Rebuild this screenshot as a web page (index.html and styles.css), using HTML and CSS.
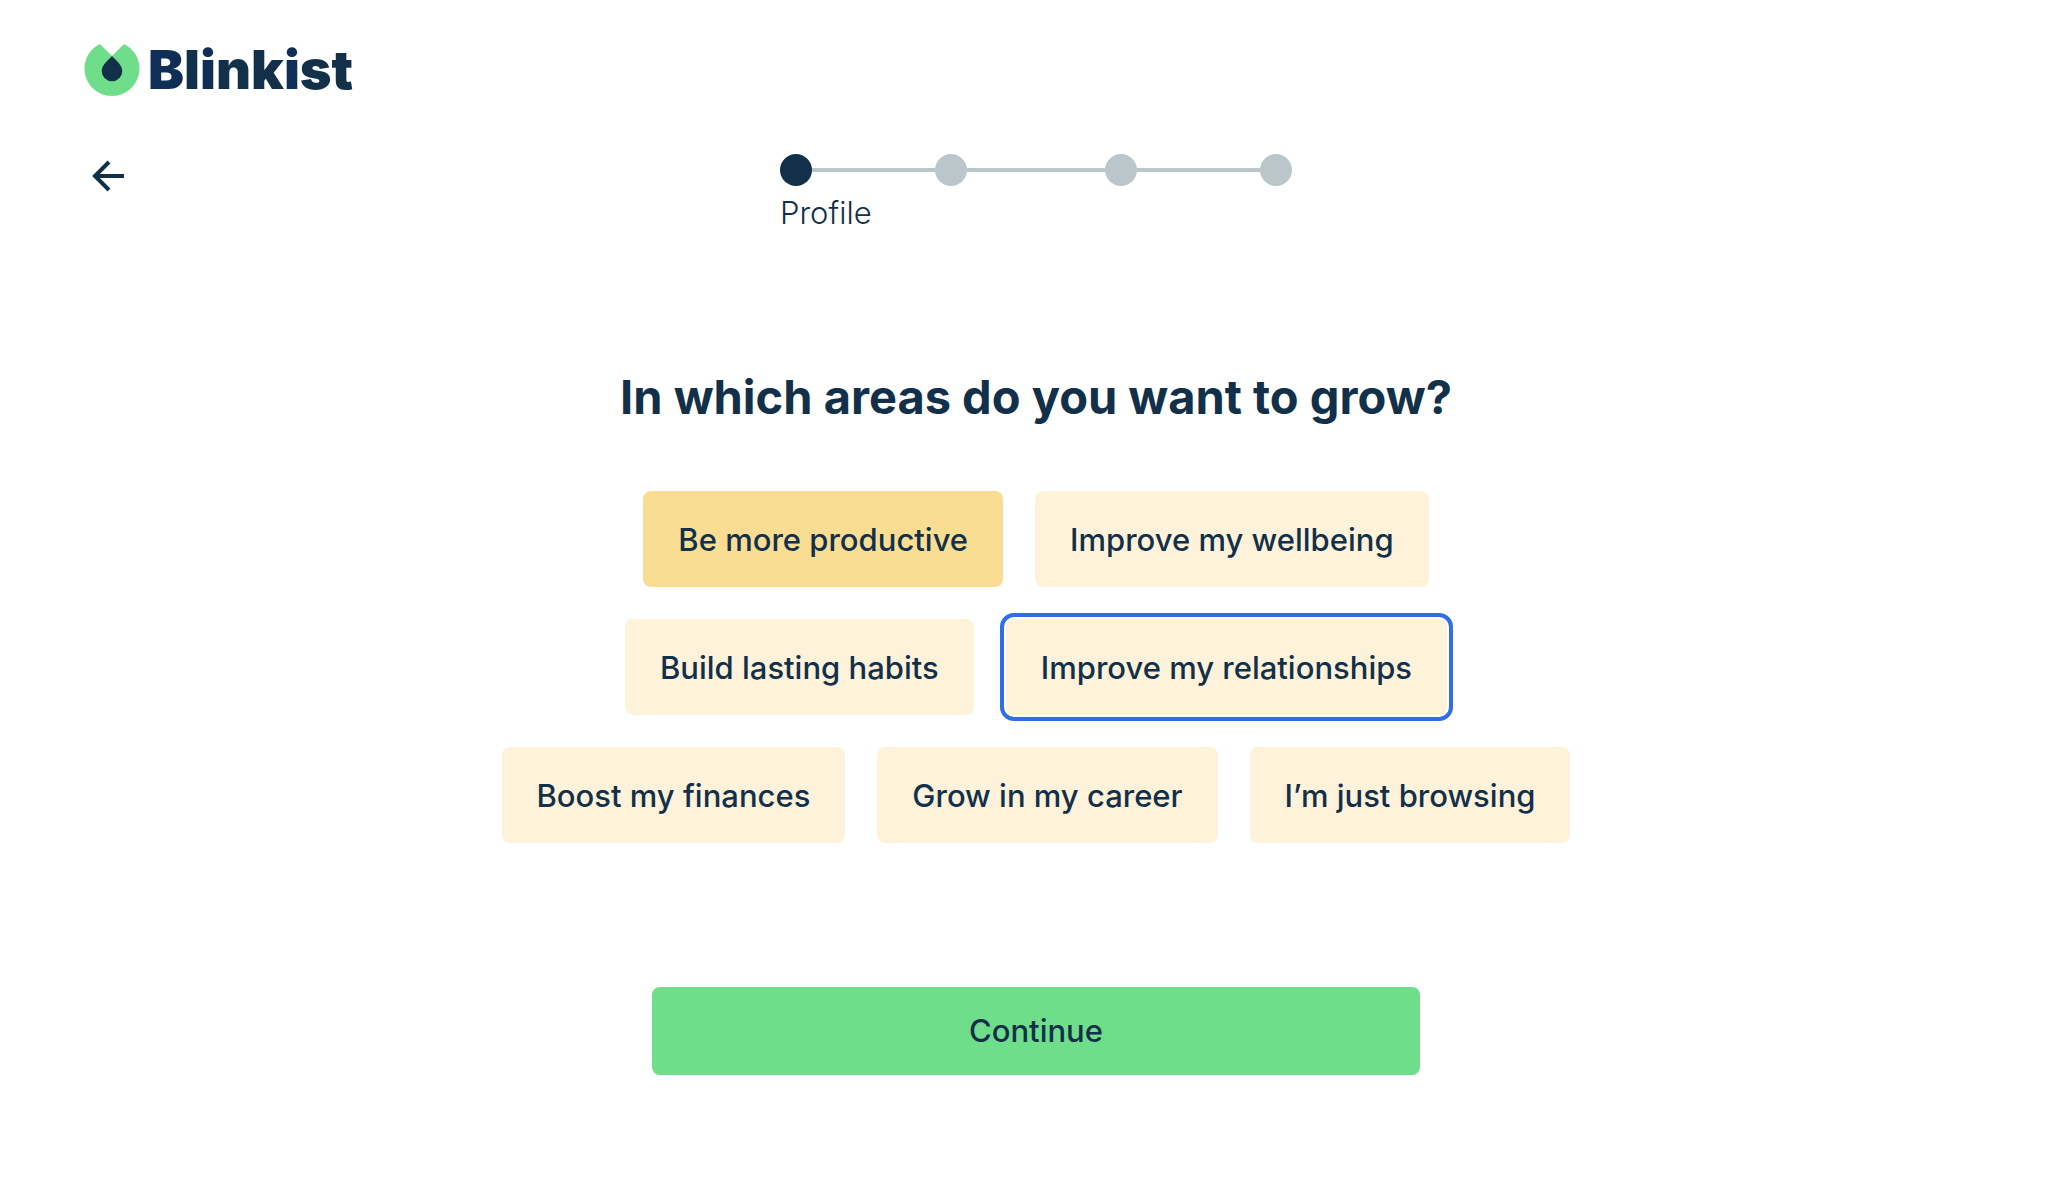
FILE: index.html
```html
<!DOCTYPE html>
<html lang="en">
<head>
  <meta charset="utf-8">
  <meta name="viewport" content="width=device-width, initial-scale=1">
  <title>Blinkist</title>
  <link rel="stylesheet" href="styles.css">
</head>
<body>
  <header class="header">
    <a class="logo" href="#">
      <svg class="logo-mark" viewBox="0 0 56 52" aria-hidden="true">
        <path fill="#6fde8a" d="M15.8 0 28 12 40 0A27.5 27.5 0 0 1 55.500 24.500C55.500 39.700 43.200 52 28 52S.5 39.700.5 24.500A27.500 27.500 0 0 1 15.800 0Z"/>
        <path fill="#13304a" d="M28 12c3.200 3.800 10.300 8.600 10.300 15A10.300 10.300 0 0 1 17.700 27C17.700 20.600 24.800 15.800 28 12Z"/>
      </svg>
      <span class="wordmark"><span class="tint">B</span>l<span class="tint">i</span>nk<span class="tint">i</span>st</span>
    </a>
  </header>

  <div class="topbar">
    <button class="back" type="button" aria-label="Back">
      <svg class="back-icon" viewBox="0 0 32 32" aria-hidden="true">
        <path d="M17 2 3 16l14 14M3 16h29" fill="none" stroke="currentColor" stroke-width="4"/>
      </svg>
    </button>
    <div class="progress">
      <div class="track">
        <span class="dot dot-active"></span><span class="line"></span>
        <span class="dot"></span><span class="line"></span>
        <span class="dot"></span><span class="line"></span>
        <span class="dot"></span>
      </div>
      <p class="step-label">Profile</p>
    </div>
  </div>

  <main class="main">
    <h1 class="title">In which areas do you want to grow?</h1>
    <div class="options">
      <div class="row">
        <button class="option option-selected" type="button" aria-pressed="true">Be more productive</button>
        <button class="option" type="button">Improve my wellbeing</button>
      </div>
      <div class="row">
        <button class="option" type="button">Build lasting habits</button>
        <button class="option option-focus" type="button">Improve my relationships</button>
      </div>
      <div class="row">
        <button class="option" type="button">Boost my finances</button>
        <button class="option" type="button">Grow in my career</button>
        <button class="option" type="button">I’m just browsing</button>
      </div>
    </div>
    <button class="continue" type="button">Continue</button>
  </main>
</body>
</html>
```
FILE: styles.css
```css
* { box-sizing: border-box; }

body {
  margin: 0;
  background: #fff;
  color: #13304a;
  font-family: Inter, "Liberation Sans", sans-serif;
  font-size: 31px;
  line-height: 40px;
}

button {
  border: 0;
  color: inherit;
  font: inherit;
  cursor: pointer;
}

.header {
  display: flex;
  padding: 38px 84px 0;
}

.logo {
  display: flex;
  align-items: center;
  gap: 8px;
  color: inherit;
  text-decoration: none;
}

.logo-mark { width: 56px; height: 52px; }

.wordmark {
  font-size: 54px;
  font-weight: 900;
  line-height: 64px;
}

.tint { color: #112f56; }

.topbar {
  display: grid;
  grid-template-columns: 1fr minmax(0, 512px) 1fr;
  align-items: start;
  padding: 52px 76px 0 92px;
}

.back {
  width: 32px;
  height: 32px;
  margin-top: 6px;
  padding: 0;
  background: none;
}

.back-icon { display: block; width: 32px; height: 32px; }

.track {
  display: grid;
  grid-template-columns: 32px 8fr 32px 9fr 32px 8fr 32px;
  align-items: center;
}

.dot { height: 32px; border-radius: 50%; background: #bbc6ca; }
.dot-active { background: #13304a; }
.line { height: 4px; background: #bbc6ca; }

.step-label { margin: 7px 0 0; font-weight: 300; }

.main {
  display: flex;
  flex-direction: column;
  align-items: center;
  padding: 132px 24px 104px 40px;
}

.title {
  margin: 0;
  font-size: 47px;
  font-weight: 700;
  line-height: 64px;
  text-align: center;
}

.options {
  display: flex;
  flex-direction: column;
  gap: 32px;
  margin-top: 62px;
}

.row {
  display: flex;
  flex-wrap: wrap;
  justify-content: center;
  gap: 32px;
}

.option {
  padding: 29px 35px 27px;
  border-radius: 8px;
  background: #fef3da;
  font-weight: 500;
}

.option-selected { background: #f9dd93; }

.option-focus { outline: 4px solid #316de8; outline-offset: 2px; }

.continue {
  width: 100%;
  max-width: 768px;
  margin-top: 144px;
  padding: 24px;
  border-radius: 8px;
  background: #6fde8a;
  font-weight: 500;
}
```
